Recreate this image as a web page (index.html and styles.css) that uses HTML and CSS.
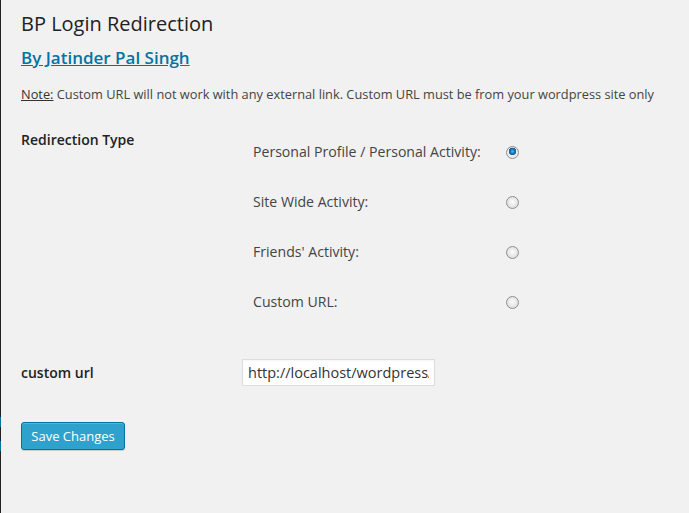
FILE: index.html
```html
<!DOCTYPE html>
<html lang="en">
<head>
<meta charset="utf-8">
<title>BP Login Redirection</title>
<link rel="stylesheet" href="styles.css">
</head>
<body>
<div class="page">
  <div class="edge"><span class="edge-blue first"></span><span class="edge-blue second"></span></div>
  <main class="wrap">
    <h2 class="title">BP Login Redirection</h2>
    <h3 class="byline"><a href="#">By Jatinder Pal Singh</a></h3>
    <p class="note"><span class="note-label">Note:</span> Custom URL will not work with any external link. Custom URL must be from your wordpress site only</p>
    <form class="settings">
      <div class="row redirect-row">
        <div class="th">Redirection Type</div>
        <div class="options">
          <label class="opt"><span class="opt-text">Personal Profile / Personal Activity:</span><input type="radio" name="type" class="radio" checked></label>
          <label class="opt"><span class="opt-text">Site Wide Activity:</span><input type="radio" name="type" class="radio"></label>
          <label class="opt"><span class="opt-text">Friends' Activity:</span><input type="radio" name="type" class="radio"></label>
          <label class="opt"><span class="opt-text">Custom URL:</span><input type="radio" name="type" class="radio"></label>
        </div>
      </div>
      <div class="row url-row">
        <div class="th">custom url</div>
        <input type="text" class="url-input" value="http://localhost/wordpress/">
      </div>
      <button type="button" class="btn">Save Changes</button>
    </form>
  </main>
</div>
</body>
</html>
```
FILE: styles.css
```css
* { box-sizing: border-box; }
html, body { margin: 0; padding: 0; }
body {
  background: #f1f1f1;
  font-family: "Open Sans", "Noto Sans", sans-serif;
  color: #444;
  width: 689px;
  height: 513px;
  overflow: hidden;
}
.page {
  display: flex;
  min-height: 513px;
}
.edge {
  width: 1px;
  background: #222;
  display: flex;
  flex-direction: column;
  flex: none;
}
.edge-blue {
  display: block;
  background: #0074a2;
  height: 10px;
}
.edge-blue.first { margin-top: 417px; }
.edge-blue.second { margin-top: 14px; }
.wrap {
  flex: 1;
  padding-left: 20px;
}
.title {
  margin: 10px 0 0;
  font-size: 20px;
  line-height: 28px;
  font-weight: 400;
  color: #222;
}
.byline {
  margin: 8px 0 0;
  font-size: 17px;
  line-height: 24px;
  font-weight: 600;
}
.byline a {
  color: #0074a2;
  text-decoration: underline;
}
.note {
  margin: 14px 0 0;
  font-size: 12.8px;
  line-height: 20px;
  color: #444;
  white-space: nowrap;
}
.note-label {
  text-decoration: underline;
  color: #333;
}
.row {
  display: grid;
  grid-template-columns: 221px 1fr;
  align-items: start;
}
.th {
  font-size: 14px;
  line-height: 20px;
  font-weight: 600;
  color: #222;
}
.redirect-row { margin-top: 23px; }
.redirect-row .th { padding-top: 3px; }
.options {
  padding-left: 11px;
  display: flex;
  flex-direction: column;
}
.opt {
  height: 50px;
  display: grid;
  grid-template-columns: 253px 13px;
  align-items: center;
  font-size: 14.1px;
  line-height: 20px;
  color: #444;
}
.radio {
  appearance: none;
  -webkit-appearance: none;
  margin: 0;
  width: 13px;
  height: 13px;
  border-radius: 50%;
  border: 1px solid #8f8f8f;
  background: radial-gradient(circle at 50% 45%, #fdfdfd 0%, #e6e6e6 55%, #cfcfcf 100%);
}
.radio:checked {
  background:
    radial-gradient(circle at 50% 40%, #5ab4f0 0px, #1f7cc4 2px, #105a94 3.5px, transparent 4px),
    radial-gradient(circle, #fafafa 0%, #e2e2e2 100%);
}
.url-row { margin-top: 32px; }
.url-row .th { padding-top: 4px; }
.url-input {
  width: 193px;
  height: 27px;
  border: 1px solid #ddd;
  background: #fff;
  padding: 0 5px;
  font-family: inherit;
  font-size: 14.5px;
  color: #333;
  box-shadow: inset 0 1px 2px rgba(0,0,0,0.04);
  outline: none;
}
.btn {
  display: block;
  margin-top: 36px;
  width: 104px;
  height: 28px;
  padding: 0;
  white-space: nowrap;
  text-align: center;
  background: #2ea2cc;
  border: 1px solid #0074a2;
  border-radius: 3px;
  box-shadow: inset 0 1px 0 rgba(120,200,230,0.5), 0 1px 0 rgba(0,0,0,0.15);
  color: #fff;
  font-family: inherit;
  font-size: 13px;
  line-height: 26px;
}
```
